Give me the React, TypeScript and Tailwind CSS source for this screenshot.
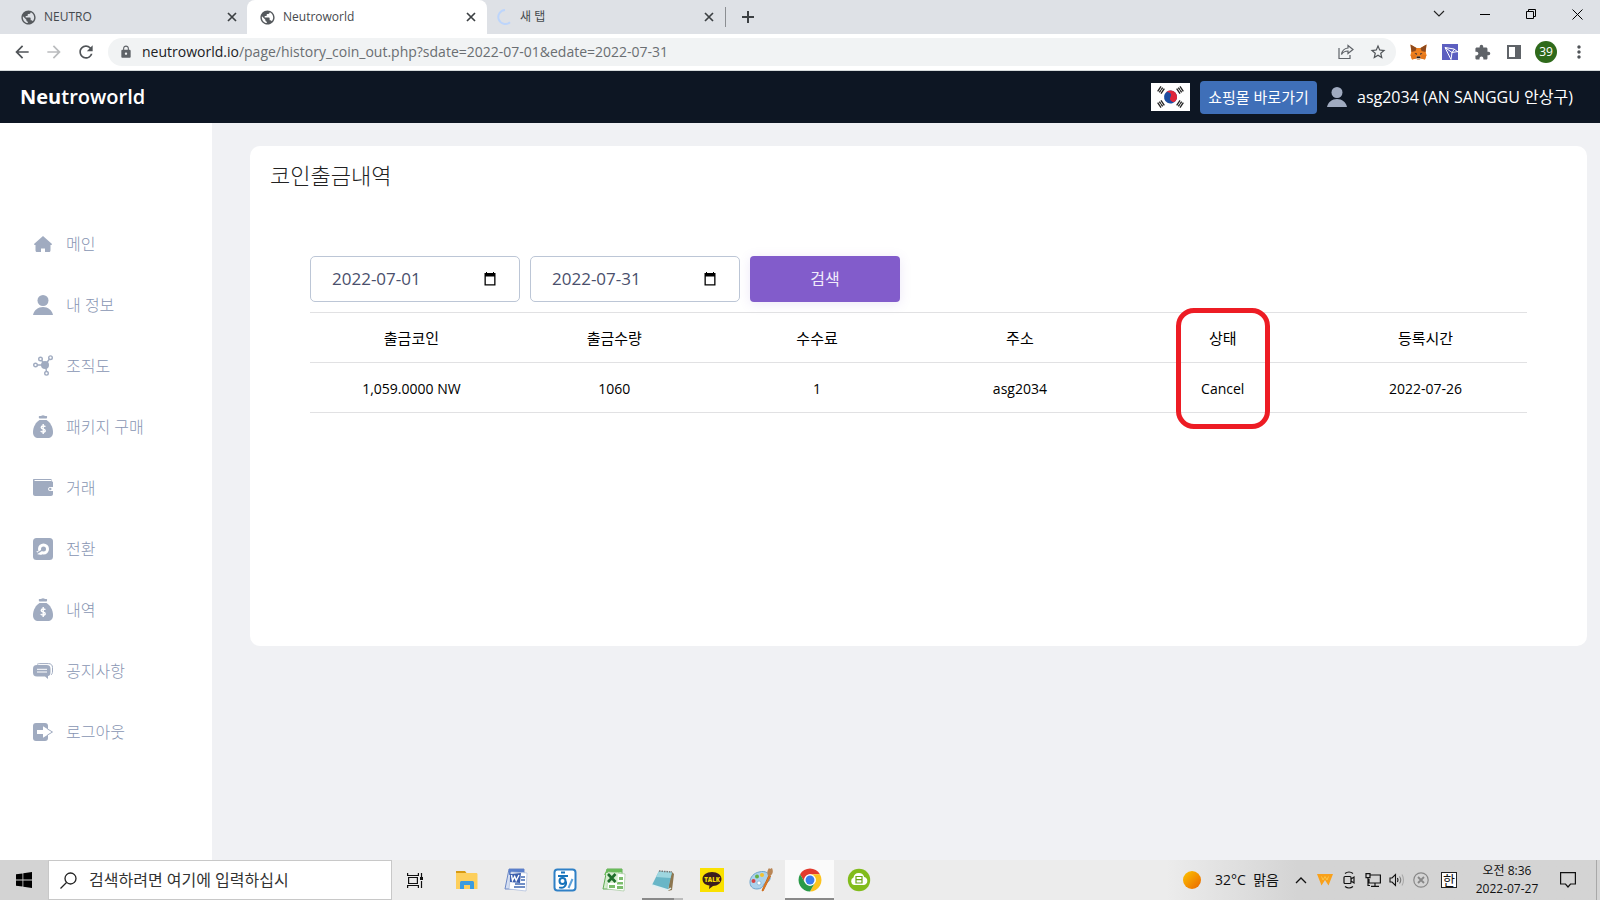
import { useState } from "react";
import type { ReactNode } from "react";
import {
  MdArrowBack,
  MdArrowForward,
  MdExtension,
  MdLock,
  MdMoreVert,
  MdPublic,
  MdRefresh,
  MdStarBorder,
} from "react-icons/md";

const tabs = [
  { title: "NEUTRO", active: false, loading: false },
  { title: "Neutroworld", active: true, loading: false },
  { title: "새 탭", active: false, loading: true },
];

function Spinner() {
  return (
    <svg width="16" height="16" viewBox="0 0 16 16" fill="none" stroke="#bdd5fb" strokeWidth="2">
      <path d="M8 1a7 7 0 1 0 5 12.2" />
    </svg>
  );
}

function CloseGlyph() {
  return (
    <svg width="10" height="10" viewBox="0 0 10 10" stroke="#3c4043" strokeWidth="1.700">
      <path d="M1 1l8 8M9 1l-8 8" />
    </svg>
  );
}

function TabStrip() {
  return (
    <div className="flex h-[34px] bg-[#dee1e6]">
      {tabs.map((tab) => (
        <div
          key={tab.title}
          className={
            tab.active
              ? "flex w-60 items-center rounded-t-lg bg-white pr-2 pl-3"
              : tab.loading
                ? "flex w-[238px] items-center pr-2 pl-[10px]"
                : "flex w-[247px] items-center pr-[7px] pl-5"
          }
        >
          {tab.loading ? <Spinner /> : <MdPublic size={17} color="#55595d" />}
          <span className="ml-[7px] flex-1 text-[12px] leading-4 text-[#45494d]">{tab.title}</span>
          <button aria-label={`${tab.title} 닫기`} className="flex size-4 items-center justify-center">
            <CloseGlyph />
          </button>
        </div>
      ))}
      <div className="my-[7px] w-px bg-[#8b8e92]" />
      <button aria-label="새 탭 열기" className="ml-3 flex w-5 items-center justify-center">
        <svg width="12" height="12" viewBox="0 0 12 12" stroke="#3c4043" strokeWidth="2">
          <path d="M6 0v12M0 6h12" />
        </svg>
      </button>
      <div className="ml-auto flex h-7">
        <button aria-label="탭 검색" className="flex w-[46px] items-center justify-center">
          <svg width="12" height="8" viewBox="0 0 12 8" fill="none" stroke="#222" strokeWidth="1.1">
            <path d="M1 1l5 5 5-5" />
          </svg>
        </button>
        <button aria-label="최소화" className="flex w-[46px] items-center justify-center">
          <svg width="10" height="10" viewBox="0 0 10 10" stroke="#000">
            <path d="M0 5.5h10" />
          </svg>
        </button>
        <button aria-label="이전 크기로 복원" className="flex w-[46px] items-center justify-center">
          <svg width="10" height="10" viewBox="0 0 10 10" fill="none" stroke="#000">
            <path d="M.5 2.5h7v7h-7zM2.5 2.5v-2h7v7h-2" />
          </svg>
        </button>
        <button aria-label="닫기" className="flex w-[46px] items-center justify-center">
          <svg width="11" height="11" viewBox="0 0 11 11" stroke="#000">
            <path d="M.5.5l10 10M10.5.5l-10 10" />
          </svg>
        </button>
      </div>
    </div>
  );
}

function FoxIcon() {
  return (
    <svg width="17" height="16" viewBox="0 0 34 32">
      <path d="M1 1l12 7h8l12-7-1.500 15L33 22l-3 9-8-2-3 2.500h-4L12 29l-8 2-3-9 1.500-6z" fill="#f0811f" />
      <path d="M1 1l12 7-2 6-8 2zM33 1l-12 7 2 6 8 2z" fill="#8d4a1e" />
      <path d="M1 22l10-1 1 8-8 2zM33 22l-10-1-1 8 8 2z" fill="#e2761b" />
      <path d="M9 18l5 1-1 3zM25 18l-5 1 1 3z" fill="#2b2d3a" />
      <path d="M12 29l2-4h6l2 4-3 2.500h-4z" fill="#c9b6a4" />
      <path d="M14 25h6l1 3h-8z" fill="#1d1b20" />
    </svg>
  );
}

function TronIcon() {
  return (
    <svg width="16" height="16" viewBox="0 0 16 16" fill="none" stroke="#fff">
      <rect width="16" height="16" fill="#5c5fc0" stroke="none" />
      <path d="M3 3.500l9 1.500 4 3M3 3.500l6 12M3 3.500l7 5M12.500 5L10 8.500l6-1M10 8.500L9 15.500" strokeWidth="1" />
    </svg>
  );
}

function Toolbar() {
  return (
    <div className="flex h-9 items-center bg-white pr-[11px] pl-3">
      <button aria-label="뒤로" className="flex w-5 justify-center">
        <MdArrowBack size={20} color="#505458" />
      </button>
      <button aria-label="앞으로" className="ml-3 flex w-5 justify-center">
        <MdArrowForward size={20} color="#babcbe" />
      </button>
      <button aria-label="새로고침" className="ml-3 flex w-5 justify-center">
        <MdRefresh size={20} color="#505458" />
      </button>
      <div className="ml-3 flex h-7 flex-1 items-center rounded-full bg-[#f1f3f4] pr-2 pl-[11px]">
        <MdLock size={14} color="#5f6368" />
        <a href="#address" className="ml-[9px] flex-1 text-[14px] leading-5 text-[#6a6e72]">
          <span className="text-[#202124]">neutroworld.io</span>
          /page/history_coin_out.php?sdate=2022-07-01&amp;edate=2022-07-31
        </a>
        <button aria-label="공유" className="flex w-5 justify-center">
          <svg width="16" height="16" viewBox="0 0 16 16" fill="none" stroke="#5f6368" strokeWidth="1.200">
            <path d="M1 4v10.500h11V11M10 1.500l5 4-5 4V7C7 7 5 8 3.500 10.500 4 7 6 4.500 10 4z" />
          </svg>
        </button>
        <button aria-label="북마크" className="ml-3 flex w-5 justify-center">
          <MdStarBorder size={18} color="#505458" />
        </button>
      </div>
      <button aria-label="MetaMask" className="ml-3 flex w-5 justify-center">
        <FoxIcon />
      </button>
      <button aria-label="TronLink" className="ml-3 flex w-5 justify-center">
        <TronIcon />
      </button>
      <button aria-label="확장 프로그램" className="ml-3 flex w-5 justify-center">
        <MdExtension size={17} color="#5f6368" />
      </button>
      <button aria-label="측면 패널" className="ml-3 flex w-5 justify-center">
        <svg width="14" height="14" viewBox="0 0 14 14">
          <path d="M0 0h14v14H0zM2 2v10h6V2z" fill="#5f6368" fillRule="evenodd" />
        </svg>
      </button>
      <button className="ml-[11px] flex size-[22px] items-center justify-center rounded-full bg-[#2f6a1b] text-[12px] leading-4 text-white">
        39
      </button>
      <button aria-label="메뉴" className="ml-3 flex w-5 justify-center">
        <MdMoreVert size={20} color="#505458" />
      </button>
    </div>
  );
}

function Trigram({ x, y, angle }: { x: number; y: number; angle: number }) {
  return (
    <g transform={`translate(${x} ${y}) rotate(${angle})`} stroke="#222" strokeWidth="1.300">
      <path d="M-3-2h6M-3 0h6M-3 2h6" />
      <path d="M0-1v2" stroke="#fff" strokeWidth=".6" />
    </g>
  );
}

function KoreanFlag() {
  return (
    <svg width="39" height="28" viewBox="0 0 39 28">
      <rect width="39" height="28" fill="#fff" />
      <g transform="rotate(28 19.500 14)">
        <circle cx="19.500" cy="14" r="6.500" fill="#1c4da1" />
        <path d="M13 14a6.500 6.500 0 0 1 13 0 3.250 3.250 0 0 1-6.500 0 3.250 3.250 0 0 0-6.500 0z" fill="#e0263a" />
      </g>
      <Trigram x={10} y={7} angle={-56} />
      <Trigram x={29} y={7} angle={56} />
      <Trigram x={10} y={21} angle={56} />
      <Trigram x={29} y={21} angle={-56} />
    </svg>
  );
}

function PersonIcon() {
  return (
    <svg width="20" height="20" viewBox="0 0 20 20" fill="#a0abc0">
      <circle cx="10" cy="5.500" r="5.500" />
      <path d="M0 20c1-5 5-8 10-8s9 3 10 8z" />
    </svg>
  );
}

function SiteHeader() {
  return (
    <header className="flex h-[52px] items-center bg-[#0d1623] pr-5 pl-5 text-white">
      <a href="#home" className="text-[20px] leading-8 font-semibold">
        <span className="font-bold">Neu</span>troworld
      </a>
      <div className="ml-auto flex items-center">
        <button aria-label="한국어">
          <KoreanFlag />
        </button>
        <a
          href="#shop"
          className="ml-[10px] flex h-[33px] w-[117px] items-center justify-center rounded bg-[#3f6fb8] text-[15px] leading-5 whitespace-nowrap"
        >
          쇼핑몰 바로가기
        </a>
        <span className="ml-[10px]">
          <PersonIcon />
        </span>
        <span className="ml-[10px] min-w-[223px] text-[16px] leading-6 whitespace-nowrap">asg2034 (AN SANGGU 안상구)</span>
      </div>
    </header>
  );
}

function MoneyBag() {
  return (
    <svg width="20" height="23" viewBox="0 0 20 23" fill="#a0abc0">
      <path d="M6.500 1c1.500.4 2-.8 3.500-.8s2 1.200 3.500.8c1 0 .8 2 0 2.500h-7C5.500 3 5.500 1 6.500 1z" />
      <path d="M6.500 5h7C17 7 20 12 20 17c0 4-2 6-5.500 6h-9C2 23 0 21 0 17 0 12 3 7 6.500 5z" />
      <path d="M12.300 11.800c-.4-1.100-4.100-1.300-4.100.6 0 2 4 1.200 4 3.300 0 1.800-4 1.600-4.400.2M10.200 9v10" fill="none" stroke="#fff" strokeWidth="1.400" />
    </svg>
  );
}

const menu: { label: string; icon: ReactNode }[] = [
  {
    label: "메인",
    icon: (
      <svg width="18" height="16" viewBox="0 0 18 16" fill="#a0abc0">
        <path d="M9 0l9 8c.3.600-.3 1-1 1h-.500v5c0 1.500-.5 2-1.500 2h-4v-3.500H7V16H3c-1 0-1.500-.5-1.500-2V9H1c-.7 0-1.300-.4-1-1z" />
      </svg>
    ),
  },
  { label: "내 정보", icon: <PersonIcon /> },
  {
    label: "조직도",
    icon: (
      <svg width="20" height="21" viewBox="0 0 20 21" fill="none" stroke="#a0abc0" strokeWidth="1.400">
        <circle cx="12" cy="10" r="4" fill="#a0abc0" stroke="none" />
        <circle cx="2.500" cy="10" r="1.800" />
        <circle cx="7.500" cy="4" r="1.800" />
        <circle cx="17.500" cy="2.700" r="1.800" />
        <circle cx="13.500" cy="18.300" r="1.800" />
        <path d="M4 10h5M8.500 5.500L11 8M16.500 4L13.500 8M13.400 16.500L13 13" />
      </svg>
    ),
  },
  { label: "패키지 구매", icon: <MoneyBag /> },
  {
    label: "거래",
    icon: (
      <svg width="20" height="17" viewBox="0 0 20 17">
        <path d="M1 0h17.500v2L20 3v12c0 1-1 2-2 2H2c-1 0-2-1-2-2V1c0-.6.400-1 1-1z" fill="#a0abc0" />
        <path d="M1.500 1.500H18" stroke="#fff" />
        <path d="M20 8h-3c-2.500 0-2.500 4 0 4h3z" fill="#fff" />
        <circle cx="17.300" cy="10" r="1.200" fill="#a0abc0" />
      </svg>
    ),
  },
  {
    label: "전환",
    icon: (
      <svg width="20" height="22" viewBox="0 0 20 22">
        <rect width="20" height="22" rx="3.500" fill="#a0abc0" />
        <circle cx="10.500" cy="11" r="4" fill="none" stroke="#fff" strokeWidth="3" />
        <path d="M3.500 13l6 1-1 3-4-.8z" fill="#fff" />
        <path d="M4 15.500l6-4" stroke="#a0abc0" strokeWidth="1.500" />
      </svg>
    ),
  },
  { label: "내역", icon: <MoneyBag /> },
  {
    label: "공지사항",
    icon: (
      <svg width="20" height="16" viewBox="0 0 20 16">
        <path d="M4 1.500C5 .7 6 .6 7 .6h8.500c2.500 0 4 1.500 4 4V8c0 2-.5 3-1.500 4" fill="none" stroke="#a0abc0" />
        <path d="M4 2h9.500c3 0 4 1.500 4 4v3c0 2.500-1 4-2.500 4v3l-3-2.500H4c-3 0-4-1.500-4-4V6c0-2.500 1-4 4-4z" fill="#a0abc0" />
        <path d="M4 6.300h10M4 9h10" stroke="#fff" />
      </svg>
    ),
  },
  {
    label: "로그아웃",
    icon: (
      <svg width="20" height="18" viewBox="0 0 20 18">
        <path d="M3 0h9c2 0 3 1 3 3v12c0 2-1 3-3 3H3c-2 0-3-1-3-3V3c0-2 1-3 3-3z" fill="#a0abc0" />
        <path d="M4 7h6V3.300L19.300 9 10 14.700V11H4z" fill="#fff" />
        <path d="M14.500 6l5 3-5 3" fill="none" stroke="#a0abc0" />
      </svg>
    ),
  },
];

function Sidebar() {
  return (
    <nav className="w-[212px] shrink-0 bg-white pt-[90px]">
      <ul>
        {menu.map((item) => (
          <li key={item.label}>
            <a href="#menu" className="flex h-[61px] items-center gap-[13px] pl-[33px]">
              <span className="flex w-5 justify-center">{item.icon}</span>
              <span className="text-[16px] leading-6 font-light text-[#8895b2]">{item.label}</span>
            </a>
          </li>
        ))}
      </ul>
    </nav>
  );
}

function DateField({ label, initial }: { label: string; initial: string }) {
  const [value, setValue] = useState(initial);
  return (
    <label className="flex h-[46px] w-[210px] items-center rounded-[5px] border border-[#bcc6d6] pr-[22px] pl-[21px]">
      <input
        aria-label={label}
        value={value}
        onChange={(event) => setValue(event.target.value)}
        className="w-full min-w-0 flex-1 text-[17px] leading-6 text-[#4a4f6c] outline-none"
      />
      <svg width="14" height="14" viewBox="0 0 14 14">
        <path d="M3 0h1v1h6V0h1v1h1.500v12.500h-11V1H3zM2.800 4.500v7.800h8.400V4.500z" fill="#000" fillRule="evenodd" />
      </svg>
    </label>
  );
}

const columns = ["출금코인", "출금수량", "수수료", "주소", "상태", "등록시간"];
const rows = [["1,059.0000 NW", "1060", "1", "asg2034", "Cancel", "2022-07-26"]];

function HistoryCard() {
  return (
    <section className="min-h-[500px] rounded-[10px] bg-white">
      <h1 className="px-5 pt-[13px] text-[22px] leading-8 font-light text-[#222]">코인출금내역</h1>
      <div className="px-[60px] pt-[65px]">
        <form className="flex gap-[10px]" onSubmit={(event) => event.preventDefault()}>
          <DateField label="시작일" initial="2022-07-01" />
          <DateField label="종료일" initial="2022-07-31" />
          <button className="h-[46px] w-[150px] rounded bg-[#825ccb] text-[16px] leading-6 text-[#f1ebfa] shadow-[0_2px_12px_rgba(130,92,203,0.15)]">
            검색
          </button>
        </form>
        <div className="relative mt-[10px]">
          <table className="w-full table-fixed border-collapse text-center text-black">
            <thead>
              <tr className="h-[50px] border-y border-[#e1e1e3]">
                {columns.map((name) => (
                  <th key={name} scope="col" className="text-[15px] leading-5 font-normal">
                    {name}
                  </th>
                ))}
              </tr>
            </thead>
            <tbody>
              {rows.map((cells) => (
                <tr key={cells[0]} className="h-[50px] border-b border-[#e1e1e3]">
                  {cells.map((cell, i) => (
                    <td key={i} className="pt-[2px] text-[14px] leading-5">
                      {cell}
                    </td>
                  ))}
                </tr>
              ))}
            </tbody>
          </table>
          <div className="absolute inset-x-0 -top-1 grid grid-cols-6">
            <div className="col-start-5 h-[121px] w-[94px] justify-self-center rounded-[18px] border-5 border-[#ed1c24]" />
          </div>
        </div>
      </div>
    </section>
  );
}

function ExplorerIcon() {
  return (
    <svg width="22" height="18" viewBox="0 0 22 18">
      <path d="M0 0h9l1.500 2H0z" fill="#d89b12" />
      <path d="M0 2h20c1 0 1.500.5 1.500 1.500V18H0z" fill="#fdcf5c" />
      <path d="M4 18v-6c0-1.500.5-2 2-2h10c1.500 0 2 .5 2 2v6h-4v-4H8v4z" fill="#3b9be0" />
    </svg>
  );
}

function WordIcon() {
  return (
    <svg width="24" height="24" viewBox="0 0 24 24">
      <path d="M5 1h15v20H1z" fill="#d4def2" stroke="#6c88c5" />
      <path d="M5 1h15v3L5 7z" fill="#5a7fcb" />
      <path d="M7 4l16 1-1 18-17-2z" fill="#fff" stroke="#a9badb" strokeWidth=".7" />
      <path d="M17 9h4M17 12h4M11 16h10M10 19h11" stroke="#4169b3" strokeWidth="1.300" />
      <path d="M6 6l11-1-1 10-10-1z" fill="#3b5ead" />
      <path d="M7.500 7l1 5.500 2.200-4 1.500 4L15 7" fill="none" stroke="#fff" strokeWidth="1.400" />
    </svg>
  );
}

function HangulIcon() {
  return (
    <svg width="24" height="24" viewBox="0 0 24 24" fill="none">
      <rect x="1.500" y="1.500" width="21" height="21" rx="3" fill="#fff" stroke="#2f80c6" strokeWidth="2" />
      <path d="M8 4.500h4M5 8h10" stroke="#1673bb" strokeWidth="2" />
      <circle cx="9.500" cy="13" r="3" stroke="#1673bb" strokeWidth="2" />
      <path d="M6 19.500c4 1 8-1 7-6" stroke="#1673bb" strokeWidth="1.800" />
      <path d="M19.500 11L15.500 20" stroke="#5b9fd8" strokeWidth="2" />
    </svg>
  );
}

function ExcelIcon() {
  return (
    <svg width="24" height="24" viewBox="0 0 24 24">
      <path d="M5 1h15v20H1z" fill="#d6edcf" stroke="#61ac55" />
      <path d="M5 1h15v3L2 7z" fill="#69bb59" />
      <path d="M6 4l17 2-1 17-17-2z" fill="#fff" stroke="#a3c99c" strokeWidth=".7" />
      <path d="M17 9h4v3h-4zM15 14h6v2.500h-6zM7 17h6v3H7zM15 18h6v3h-6z" fill="#7bbd6c" />
      <path d="M4 5l12-.5-.5 10.500L4 15z" fill="#d6edcf" />
      <path d="M6 6l7.500 8M13.500 6L6 14" stroke="#1f6f2b" strokeWidth="2.600" />
    </svg>
  );
}

function NotepadIcon() {
  return (
    <svg width="24" height="24" viewBox="0 0 24 24">
      <path d="M20 3l3 3-2 16-4 1z" fill="#8d7650" />
      <path d="M8 3l13 1-4 18L1 17z" fill="#69b6c7" />
      <path d="M8 3l13 1-1.500 6L5 9z" fill="#9ed6df" />
      <path d="M1 17l16 5 3-2" fill="none" stroke="#dfeff2" strokeWidth="1.500" />
      <path d="M8 3l13 1" stroke="#777" strokeWidth="1.500" strokeDasharray="1.500 1" />
    </svg>
  );
}

function TalkIcon() {
  return (
    <svg width="24" height="24" viewBox="0 0 24 24">
      <rect width="24" height="24" fill="#fae100" />
      <path d="M12 4c5.500 0 9.500 3 9.500 7s-4 7-8.500 7l-4 3 .5-3.500C5 17 2.500 14.500 2.500 11c0-4 4-7 9.500-7z" fill="#3b1e1e" />
      <text x="12" y="13.500" textAnchor="middle" fontSize="6" fontWeight="800" fill="#fae100">
        TALK
      </text>
    </svg>
  );
}

function PaintIcon() {
  return (
    <svg width="24" height="24" viewBox="0 0 24 24">
      <path d="M10 4c7-2 12 2 11 7-1 4-5 3-6 5-1 3-3 5-7 5-5 0-7-3-7-7C1 9 5 5 10 4z" fill="#acd2ec" stroke="#6ea5cd" />
      <circle cx="4.500" cy="13" r="2" fill="#d64545" />
      <circle cx="8" cy="8.500" r="2" fill="#62b146" />
      <circle cx="13" cy="7" r="2" fill="#f2c230" />
      <circle cx="10" cy="15" r="2" fill="#fff" stroke="#6ea5cd" strokeWidth=".6" />
      <path d="M20 7l1.500 1L14 23l-1-.5z" fill="#e98325" stroke="#c9691a" />
      <path d="M19 8c-1-3-1-5 1-8l1 1 2-1c2 4 0 7-2 8z" fill="#b98656" />
    </svg>
  );
}

function ChromeIcon() {
  return (
    <svg width="24" height="24" viewBox="1 1 46 46">
      <path d="M4.950 13A22 22 0 0 1 43.050 13H24A11 11 0 0 0 14.470 29.500z" fill="#e33b2e" />
      <path d="M43.050 13A22 22 0 0 1 24 46l9.530-16.500A11 11 0 0 0 24 13z" fill="#fcc31e" />
      <path d="M24 46A22 22 0 0 1 4.950 13l9.520 16.500a11 11 0 0 0 19.060 0z" fill="#2a9a48" />
      <circle cx="24" cy="24" r="11" fill="#fff" />
      <circle cx="24" cy="24" r="8.500" fill="#3b7ded" />
    </svg>
  );
}

function CloudIcon() {
  return (
    <svg width="24" height="24" viewBox="0 0 24 24">
      <circle cx="12" cy="12" r="11.200" fill="#82bc1c" />
      <path d="M7 17a4 4 0 0 1-.5-7.500 5.500 5.500 0 0 1 10.700-.5 4.100 4.100 0 0 1-.2 8z" fill="#fff" />
      <path d="M9 8.500h6v6.500H9zM9 11.700h6" fill="none" stroke="#6ca615" strokeWidth="1.200" />
    </svg>
  );
}

const apps: { name: string; icon: ReactNode; state: "idle" | "open" | "active" }[] = [
  { name: "파일 탐색기", icon: <ExplorerIcon />, state: "idle" },
  { name: "Word", icon: <WordIcon />, state: "idle" },
  { name: "한글", icon: <HangulIcon />, state: "idle" },
  { name: "Excel", icon: <ExcelIcon />, state: "idle" },
  { name: "메모장", icon: <NotepadIcon />, state: "open" },
  { name: "카카오톡", icon: <TalkIcon />, state: "idle" },
  { name: "그림판", icon: <PaintIcon />, state: "idle" },
  { name: "Chrome", icon: <ChromeIcon />, state: "active" },
  { name: "클라우드", icon: <CloudIcon />, state: "idle" },
];

function SystemTray() {
  return (
    <div className="ml-auto flex items-center bg-linear-to-r from-[#ececec] to-[#d4d4d4] to-30% pl-4 text-[#111]">
      <button className="flex items-center gap-2">
        <svg width="18" height="18" viewBox="0 0 18 18">
          <defs>
            <linearGradient id="sun" x1="0" y1="0" x2="1" y2="1">
              <stop offset="0" stopColor="#fdc500" />
              <stop offset="1" stopColor="#ea6500" />
            </linearGradient>
          </defs>
          <circle cx="9" cy="9" r="9" fill="url(#sun)" />
        </svg>
        <span className="w-[74px] pl-[2px] text-[14px] leading-5 whitespace-nowrap">32°C&nbsp; 맑음</span>
      </button>
      <button aria-label="숨겨진 아이콘 표시" className="ml-[6px] flex w-6 justify-center">
        <svg width="12" height="8" viewBox="0 0 12 8" fill="none" stroke="#111" strokeWidth="1.300">
          <path d="M1 7l5-5 5 5" />
        </svg>
      </button>
      <span className="flex w-6 justify-center">
        <svg width="16" height="12" viewBox="0 0 16 12">
          <path d="M0 0h16l-4.500 11.500L8 6l-3.500 5.500z" fill="#f9a11b" />
          <path d="M4.500 2.500L6 6l2-3.500L10 6l1.500-3.500" fill="none" stroke="#fcc64a" />
        </svg>
      </span>
      <span className="flex w-6 justify-center">
        <svg width="12" height="18" viewBox="0 0 12 18" fill="none" stroke="#111" strokeWidth="1.200">
          <rect x="1" y="5.500" width="7" height="7" rx="1" />
          <path d="M8 8l3-2v6l-3-2M2 2.500q4-3 8 0M2 15.500q4 3 8 0" />
        </svg>
      </span>
      <span className="flex w-6 justify-center">
        <svg width="16" height="14" viewBox="0 0 16 14" fill="none" stroke="#111" strokeWidth="1.200">
          <path d="M5 2h10.400v8H4V6M10 10v3M6 13.300h8M1 .6h4v4H1zM3 5v7.500h2" />
        </svg>
      </span>
      <span className="flex w-6 justify-center">
        <svg width="16" height="14" viewBox="0 0 16 14" fill="none" stroke="#111" strokeWidth="1.100">
          <path d="M1 5h2l3.500-3.500v11L3 9H1zM8.500 5q1 2 0 4" />
          <path d="M10.500 3.500q2.500 3.500 0 7" stroke="#777" />
          <path d="M13 1.500q3 5.500 0 11" stroke="#aaa" />
        </svg>
      </span>
      <span className="flex w-6 justify-center">
        <svg width="16" height="16" viewBox="0 0 16 16" fill="none" stroke="#888" strokeWidth="1.200">
          <circle cx="8" cy="8" r="7.200" />
          <path d="M5 5l6 6M11 5l-6 6" strokeWidth="1.800" />
        </svg>
      </span>
      <button className="ml-2 flex size-4 items-center justify-center border border-[#222] bg-white text-[13px] leading-3">
        한
      </button>
      <button className="ml-3 w-[76px] text-center text-[12px] leading-[18px] whitespace-nowrap">
        오전 8:36
        <br />
        2022-07-27
      </button>
      <button aria-label="알림" className="ml-[11px] flex w-6 justify-center">
        <svg width="16" height="16" viewBox="0 0 16 16" fill="none" stroke="#111" strokeWidth="1.200">
          <path d="M.6.600h14.800v11.400H10.500L8 15l-2.500-3H.6z" />
        </svg>
      </button>
      <span className="ml-4 h-full w-1 border-l border-[#a8a8a8]" />
    </div>
  );
}

function Taskbar() {
  return (
    <footer className="flex h-10 bg-[#ececec]">
      <button aria-label="시작" className="flex w-12 items-center justify-center bg-[#d3d3d3]">
        <svg width="16" height="16" viewBox="0 0 16 16">
          <path d="M0 2.300L6.500 1.400V7.600H0zM7.300 1.300L16 0v7.600H7.300zM0 8.400h6.500v6.200L0 13.700zM7.300 8.400H16V16l-8.700-1.300z" />
        </svg>
      </button>
      <label className="flex w-[344px] items-center border border-[#c8c8c8] bg-white pl-[11px]">
        <svg width="17" height="17" viewBox="0 0 17 17" fill="none" stroke="#222" strokeWidth="1.300">
          <circle cx="10.500" cy="6.500" r="5.500" />
          <path d="M6.500 10.500L.5 16.500" />
        </svg>
        <input
          aria-label="Windows 검색"
          placeholder="검색하려면 여기에 입력하십시"
          className="ml-3 w-full min-w-0 flex-1 text-[16px] leading-6 outline-none placeholder:text-[#333]"
        />
      </label>
      <button aria-label="작업 보기" className="mr-1 flex w-[46px] items-center justify-center">
        <svg width="17" height="15" viewBox="0 0 17 15" fill="none" stroke="#111" strokeWidth="1.200">
          <path d="M.6 0v2.500h10.800V0M.6 15v-2.500h10.800V15M1.600 4.500h8.800v6H1.600zM14.500 0v4M14.500 8v7" />
          <path d="M13 4h3v3h-3z" fill="#111" stroke="none" />
        </svg>
      </button>
      <div className="flex">
        {apps.map((app) => (
          <button
            key={app.name}
            aria-label={app.name}
            className={
              app.state === "active"
                ? "flex w-[49px] items-center justify-center border-b-2 border-[#8a8a8a] bg-[#fafafa] pt-[2px]"
                : app.state === "open"
                  ? "flex w-[49px] items-center justify-center bg-[linear-gradient(to_right,transparent_4px,#8a8a8a_4px_36px,#bcbcbc_36px_45px,transparent_45px)] bg-[length:100%_2px] bg-bottom bg-no-repeat"
                  : "flex w-[49px] items-center justify-center"
            }
          >
            {app.icon}
          </button>
        ))}
      </div>
      <SystemTray />
    </footer>
  );
}

export default function App() {
  return (
    <div className="flex min-h-screen flex-col bg-[#f0f1f4] font-['Open_Sans','Noto_Sans_CJK_KR',sans-serif]">
      <TabStrip />
      <Toolbar />
      <div className="h-px bg-[#d5dadb]" />
      <SiteHeader />
      <div className="flex flex-1">
        <Sidebar />
        <main className="min-w-0 flex-1 pt-[23px] pr-[13px] pl-[38px]">
          <HistoryCard />
        </main>
      </div>
      <Taskbar />
    </div>
  );
}
